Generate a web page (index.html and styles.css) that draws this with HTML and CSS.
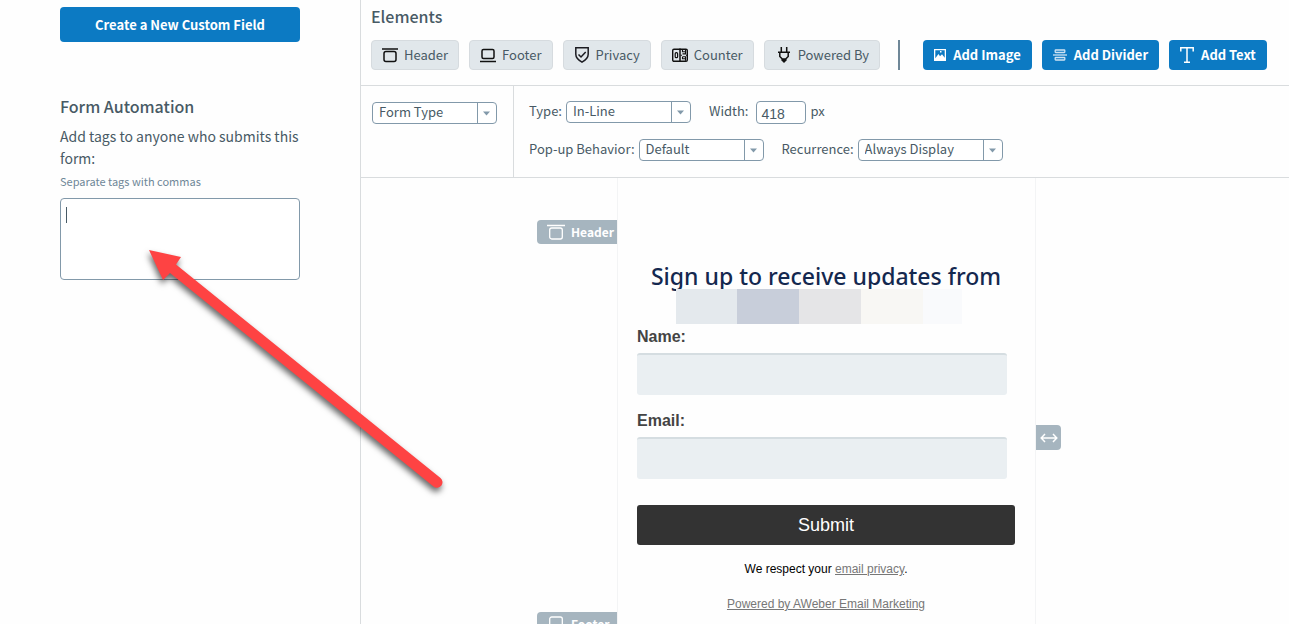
FILE: index.html
```html
<!DOCTYPE html>
<html lang="en">
<head>
<meta charset="utf-8">
<title>Form builder</title>
<link rel="stylesheet" href="styles.css">
</head>
<body>
<div class="app">
  <aside class="sidebar">
    <button type="button" class="btn btn-primary btn-block">Create a New Custom Field</button>
    <section class="automation">
      <h2 class="heading">Form Automation</h2>
      <label class="automation-label" for="tags">Add tags to anyone who submits this form:</label>
      <p class="hint" id="tags-hint">Separate tags with commas</p>
      <div class="tags-box">
        <textarea class="tags-input" id="tags" aria-describedby="tags-hint"></textarea>
        <span class="caret"></span>
      </div>
    </section>
  </aside>

  <main class="main">
    <header class="elements">
      <h2 class="heading">Elements</h2>
      <div class="toolbar">
        <button type="button" class="btn btn-light">
          <svg class="icon" width="16" height="16" viewBox="0 0 16 16" fill="none" stroke="#111"><path d="M0 2h16" stroke-width="1.5"/><rect x="2" y="4.5" width="12" height="10" rx="2" stroke-width="1.5"/></svg>
          Header
        </button>
        <button type="button" class="btn btn-light">
          <svg class="icon" width="16" height="16" viewBox="0 0 16 16" fill="none" stroke="#111"><rect x="2" y="2.5" width="12" height="9" rx="1.5" stroke-width="1.5"/><path d="M0 14.5h16" stroke-width="1.5"/></svg>
          Footer
        </button>
        <button type="button" class="btn btn-light">
          <svg class="icon" width="16" height="16" viewBox="0 0 16 16" fill="none" stroke="#1c1c22" stroke-width="1.5"><path d="M1.8.8h12.4v6.4c0 3.6-2.8 6-6.2 8-3.4-2-6.200-4.400-6.200-8z"/><path d="M4.500 7.500l2.500 2.500 4.700-5"/></svg>
          Privacy
        </button>
        <button type="button" class="btn btn-light">
          <svg class="icon" width="16" height="16" viewBox="0 0 16 16" fill="none" stroke="#111"><rect x=".7" y="2.200" width="14.600" height="12.100" rx="1.300" stroke-width="1.400"/><path d="M8 1.500v13.500" stroke-width="1.500"/><rect x="3.200" y="5.700" width="2.400" height="5" rx="1" stroke-width="1.200"/><path d="M10.500 2.500v2.200h3v-2M13.500 4.700v2.200h-3M8.500 8.300h1.500M14 8.300h1.500M10.500 9.700h3v4M10.500 9.700v2h3" stroke-width="1.100"/></svg>
          Counter
        </button>
        <button type="button" class="btn btn-light btn-wide">
          <svg class="icon" width="12" height="16" viewBox="0 0 12 16" fill="none" stroke="#111" stroke-width="1.500"><path d="M3.300 0v5M8.700 0v5M0 5.200h12M1.800 5.200v4.300L4.300 12h3.400l2.500-2.500V5.200"/><path d="M3.500 12h5v1.500L6 16l-2.500-2.500z" fill="#111" stroke="none"/></svg>
          Powered By
        </button>
        <span class="toolbar-divider"></span>
        <button type="button" class="btn btn-primary">
          <svg class="icon" width="12" height="12" viewBox="0 0 12 12"><path fill="#fff" fill-rule="evenodd" d="M0 0h12v12H0zM1.300 1.300v8L4.500 5 6 7.300l2-2 2.700 3.500V1.300zM6 2h1.500v1.500H6z"/></svg>
          Add Image
        </button>
        <button type="button" class="btn btn-primary">
          <svg class="icon" width="14" height="12" viewBox="0 0 14 12" fill="none" stroke="#cfe3f3" stroke-width="1.300"><rect x="2.200" y="1" width="9.600" height="2.500" rx=".5"/><path d="M0 6h14"/><rect x="2.200" y="8.500" width="9.600" height="2.500" rx=".5"/></svg>
          Add Divider
        </button>
        <button type="button" class="btn btn-primary">
          <svg class="icon" width="14" height="16" viewBox="0 0 14 16" fill="none" stroke="#fff" stroke-width="1.500"><path d="M.8 4.500V.8h12.400v3.700M7 .8v14.400M4 15.200h6"/></svg>
          Add Text
        </button>
      </div>
    </header>

    <div class="settings">
      <div class="settings-kind">
        <select class="select" aria-label="Setting group"><option>Form Type</option></select>
      </div>
      <div class="settings-fields">
        <div class="row">
          <div class="field"><label for="type">Type:</label><select class="select" id="type"><option>In-Line</option></select></div>
          <div class="field"><label for="width">Width:</label><input class="number" id="width" type="text" value="418"><span class="unit">px</span></div>
        </div>
        <div class="row">
          <div class="field"><label for="popup">Pop-up Behavior:</label><select class="select" id="popup"><option>Default</option></select></div>
          <div class="field"><label for="recurrence">Recurrence:</label><select class="select select-wide" id="recurrence"><option>Always Display</option></select></div>
        </div>
      </div>
    </div>

    <div class="canvas">
      <div class="tags">
        <div class="tag">
          <svg width="18" height="16" viewBox="0 0 18 16" fill="none" stroke="#fff"><path d="M0 1.500h18" stroke-width="1.500"/><rect x="2.700" y="4" width="12.600" height="11" rx="2" stroke-width="1.300"/></svg>
          Header
        </div>
        <div class="tag">
          <svg width="18" height="16" viewBox="0 0 18 16" fill="none" stroke="#fff"><rect x="2.700" y="1" width="12.600" height="11" rx="2" stroke-width="1.300"/><path d="M0 14.500h18" stroke-width="1.500"/></svg>
          Footer
        </div>
      </div>
      <form class="card">
        <h1 class="card-title">Sign up to receive updates from</h1>
        <div class="blocks"><span class="block b1"></span><span class="block b2"></span><span class="block b3"></span><span class="block b4"></span><span class="block b5"></span></div>
        <label class="card-label" for="name">Name:</label>
        <input class="card-input" id="name" type="text">
        <label class="card-label" for="email">Email:</label>
        <input class="card-input" id="email" type="text">
        <button type="button" class="submit">Submit</button>
        <p class="note">We respect your <a href="#">email privacy</a>.</p>
        <p class="note"><a href="#">Powered by AWeber Email Marketing</a></p>
      </form>
      <button type="button" class="resize" aria-label="Resize form">
        <svg width="18" height="10" viewBox="0 0 18 10" fill="none" stroke="#fff" stroke-width="1.500"><path d="M1.500 5h15M5 1L1.200 5 5 9M13 1l3.800 4L13 9"/></svg>
      </button>
    </div>
  </main>

  <svg class="arrow" width="320" height="260" viewBox="0 0 320 260"><path fill="#fe4343" d="M9 10l32 7-5 7.500 264.500 213.500a5 5 0 0 1-7 8.500L30 33l-7 7z"/></svg>
</div>
</body>
</html>
```
FILE: styles.css
```css
* {
  box-sizing: border-box;
}

body {
  margin: 0;
  background: #fefefe;
  color: #485a65;
  font: 14px/22px "Noto Sans CJK SC", "Open Sans", sans-serif;
}

h1, h2, p {
  margin: 0;
}

button, select, input, textarea {
  font: inherit;
  color: inherit;
}

.app {
  position: relative;
  display: flex;
  height: 100vh;
  overflow: hidden;
}

.sidebar {
  flex: none;
  width: 361px;
  padding: 7px 60px 0;
  border-right: 1px solid #d9dcde;
}

.heading {
  font-size: 16px;
  line-height: 24px;
  font-weight: 500;
}

.btn {
  display: flex;
  align-items: center;
  justify-content: center;
  gap: 6px;
  height: 30px;
  padding: 0 10px;
  border: 1px solid #d6dbdf;
  border-radius: 4px;
  font-size: 13px;
  line-height: 20px;
  white-space: nowrap;
}

.btn-light {
  background: #e1e7eb;
}

.btn-wide {
  gap: 8px;
  padding: 0 10px 0 13px;
}

.btn-primary {
  gap: 7px;
  padding: 0 11px;
  border: 0;
  background: #0c7ac3;
  color: #fff;
  font-weight: 700;
}

.btn-block {
  width: 100%;
  height: 35px;
}

.automation {
  display: flex;
  flex-direction: column;
  margin-top: 52px;
}

.automation-label {
  margin-top: 7px;
}

.hint {
  margin-top: 2px;
  font-size: 11px;
  line-height: 20px;
  color: #6f8798;
}

.tags-box {
  position: relative;
  display: flex;
  margin-top: 7px;
}

.tags-input {
  width: 100%;
  height: 82px;
  padding: 6px;
  border: 1px solid #8299aa;
  border-radius: 4px;
  background: #fff;
  resize: none;
}

.caret {
  position: absolute;
  left: 6px;
  top: 9px;
  width: 1px;
  height: 16px;
  background: #485a65;
}

.main {
  flex: 1;
  min-width: 0;
  display: flex;
  flex-direction: column;
}

.elements {
  padding: 4px 10px 15px;
  border-bottom: 1px solid #d9dcde;
}

.toolbar {
  display: flex;
  gap: 10px;
  margin-top: 12px;
}

.toolbar-divider {
  width: 2px;
  margin: 0 13px 0 8px;
  background: #6f8798;
}

.icon {
  flex: none;
}

.settings {
  display: flex;
  border-bottom: 1px solid #d9dcde;
  font-size: 13px;
}

.settings-kind {
  padding: 15px 16px 15px 11px;
  border-right: 1px solid #d9dcde;
}

.settings-fields {
  display: flex;
  flex-direction: column;
  gap: 16px;
  padding: 15px 15px 16px;
}

.row {
  display: flex;
  gap: 18px;
  height: 22px;
}

.field {
  display: flex;
  gap: 4px;
  line-height: 20px;
}

.select {
  appearance: none;
  width: 125px;
  height: 22px;
  padding: 0 24px 2px 6px;
  border: 1px solid #8299aa;
  border-radius: 4px;
  background:
    url("data:image/svg+xml,%3Csvg xmlns='http://www.w3.org/2000/svg' width='19' height='20'%3E%3Cpath d='M.5 0v20' stroke='%238299aa'/%3E%3Cpath d='M6 8.500h7l-3.500 4z' fill='%238299aa'/%3E%3C/svg%3E")
    right center no-repeat #fff;
  line-height: 18px;
}

.select-wide {
  width: 145px;
}

.number {
  width: 50px;
  height: 23px;
  padding: 2px 4px 0;
  margin-left: 4px;
  border: 1px solid #8299aa;
  border-radius: 4px;
  background: #fff;
  font: 14px/18px "Liberation Sans", Arial, sans-serif;
}

.canvas {
  flex: 1;
  min-height: 0;
  display: grid;
  grid-template-columns: 1fr 419px 1fr;
  padding-left: 3px;
}

.tags {
  display: flex;
  flex-direction: column;
  align-items: flex-end;
  gap: 368px;
  padding-top: 42px;
}

.tag {
  flex: none;
  display: flex;
  align-items: center;
  gap: 6px;
  width: 80px;
  height: 24px;
  padding-left: 10px;
  border-radius: 4px 0 0 4px;
  background: #a6b5bf;
  color: #fff;
  font-size: 12px;
  font-weight: 700;
}

.card {
  display: flex;
  flex-direction: column;
  padding: 80px 20px 0 19px;
  border: solid #f3f4f5;
  border-width: 0 1px;
  font-family: "Liberation Sans", Arial, sans-serif;
}

.card-title {
  height: 31px;
  color: #14284f;
  font: 500 23px/36px "Noto Sans", "Open Sans", sans-serif;
  text-align: center;
  white-space: nowrap;
}

.blocks {
  position: relative;
  display: flex;
  align-self: center;
  width: 287px;
  height: 35px;
  margin-right: 14px;
}

.block {
  flex: 62;
}

.b1 { background: #e4e9ed; }
.b2 { background: #c8ceda; }
.b3 { background: #e5e5e7; }
.b4 { background: #f8f7f4; }
.b5 { flex: 40; background: #f9fafc; }

.card-label {
  height: 29px;
  padding-top: 3px;
  color: #444;
  font-size: 16px;
  line-height: 20px;
  font-weight: 700;
}

.card-input {
  width: calc(100% - 8px);
  height: 42px;
  margin-bottom: 13px;
  padding: 0 8px;
  border: 0;
  border-top: 2px solid #d5dde1;
  border-radius: 3px;
  background: #eaeff2;
}

.submit {
  height: 40px;
  margin: 13px 0;
  border: 0;
  border-radius: 3px;
  background: #333;
  color: #fff;
  font-size: 18px;
}

.note {
  margin-bottom: 13px;
  color: #000;
  font-size: 12px;
  text-align: center;
}

.note a {
  color: #777;
}

.resize {
  display: flex;
  align-items: center;
  justify-content: center;
  width: 25px;
  height: 25px;
  margin-top: 247px;
  padding: 0;
  border: 0;
  border-radius: 0 4px 4px 0;
  background: #a6b5bf;
}

/* Pointer laid over the sidebar and canvas */
.arrow {
  position: absolute;
  left: 140px;
  top: 240px;
  overflow: visible;
  pointer-events: none;
  filter: drop-shadow(-1px 4px 3px rgba(0, 0, 0, 0.6));
}
```
